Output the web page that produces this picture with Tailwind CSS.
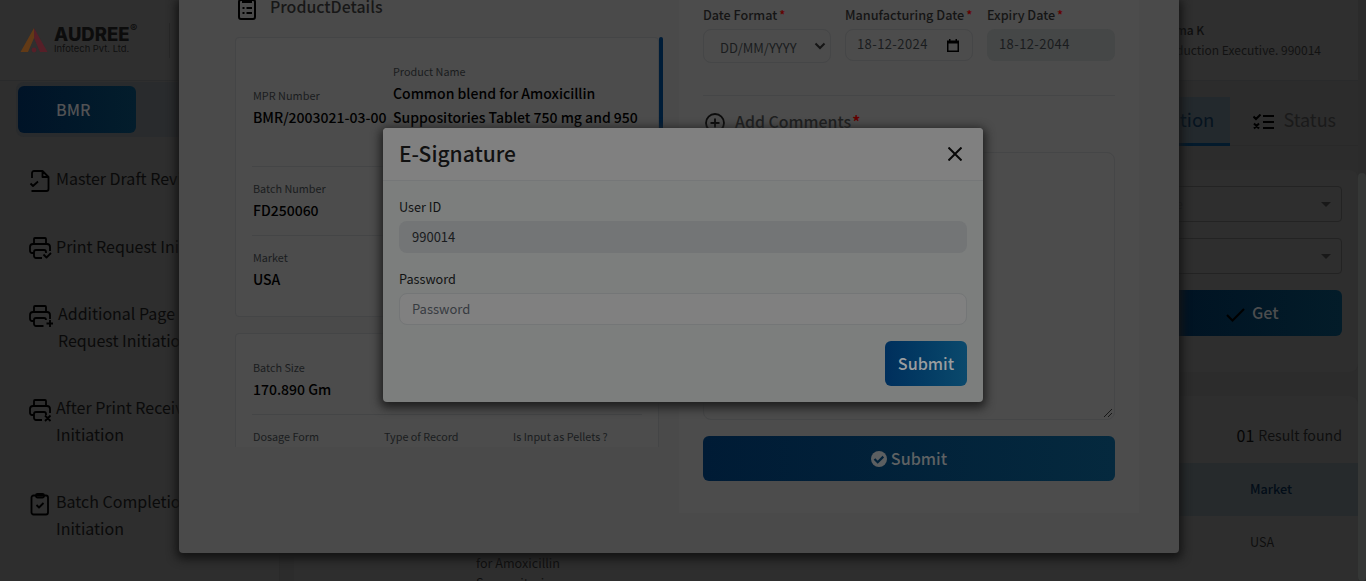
<!DOCTYPE html>
<html lang="en">
<head>
<meta charset="utf-8">
<title>E-Signature</title>
<script src="https://cdn.jsdelivr.net/npm/@tailwindcss/browser@4"></script>
</head>
<body class="relative h-[581px] w-[1366px] overflow-hidden bg-[#2d2d2d] font-['Noto_Sans_CJK_SC','Noto_Sans',sans-serif] text-[#0e0e0e]">

<!-- Application page -->
<div class="flex h-full flex-col">
  <div class="flex min-h-0 flex-1">
    <div class="flex w-[1358px] flex-col">
      <header class="flex h-[81px] shrink-0 items-center border-b border-[#292a2b] bg-[#2f2f2f] pl-5">
        <svg class="h-[26px] w-7" viewBox="0 0 28 26"><path d="M14 1v10L8 25H0.500z" fill="#623a16"/><path d="M14 1v10l6 14h7.500z" fill="#561f28"/><circle cx="14" cy="23" r="2.400" fill="#561f28"/></svg>
        <div class="ml-1.5 flex flex-col pt-[2px]">
          <div class="flex h-[15px] items-start font-['Inter',sans-serif] text-[18.500px] leading-[15px] font-extrabold text-[#0c0c0c]"><span class="w-[76px]">AUDREE</span><span class="-mt-1.5 text-[11px] font-semibold">®</span></div>
          <div class="mt-px font-['Inter',sans-serif] text-[9.400px] leading-3 text-[#101010]">Infotech Pvt. Ltd.</div>
        </div>
        <div class="ml-8 h-[35px] w-px bg-[#292929]"></div>
        <div class="ml-auto mr-[37px] flex flex-col pb-px">
          <div class="-ml-[9px] text-[12px] leading-5 font-medium">Reshma K</div>
          <div class="text-[12px] leading-5 text-[#121212]">Production Executive. 990014</div>
        </div>
      </header>
      <div class="flex min-h-0 flex-1">
        <aside class="w-[280px] shrink-0 border-r border-[#2a2a2a] bg-[#2e2e2e] pt-px pl-4">
          <div class="h-[55px] rounded-lg bg-[#292b2d] pt-1 pl-0.5">
            <div class="flex h-[47px] w-[118px] items-center rounded-md bg-gradient-to-r from-[#001327] to-[#031d2c] pb-0.5 pl-[38px] text-[16px] font-medium text-[#515254]">BMR</div>
          </div>
          <nav class="text-[16px] leading-[27px] whitespace-nowrap text-[#0a0a0a]">
            <div class="mt-[28px] flex h-[68px] pl-3">
              <svg class="mt-1 mr-1 h-6 w-6 shrink-0" viewBox="0 0 24 24" fill="none" stroke="#000" stroke-width="1.800" stroke-linejoin="round"><path d="M4 9V4a2 2 0 0 1 2-2h8.500L20.500 8v12a2 2 0 0 1-2 2H3.500M14.500 2v6h6M2.500 14.500l2.500 2.500 5-4.500"/></svg>
              <div>Master Draft Review</div>
            </div>
            <div class="flex h-[67px] pl-3">
              <svg class="mt-[3px] mr-1 h-6 w-6 shrink-0" viewBox="0 0 24 24" fill="none" stroke="#000" stroke-width="1.800" stroke-linejoin="round"><path d="M6 7.500V3a1 1 0 0 1 1-1h10a1 1 0 0 1 1 1v4.500M6 17H4a2 2 0 0 1-2-2v-4a3 3 0 0 1 3-3h14a3 3 0 0 1 3 3v4M14 22H8a2 2 0 0 1-2-2v-4a2 2 0 0 1 2-2h8a2 2 0 0 1 2 2v1M15.500 18.500l3 3 4.500-4.500"/></svg>
              <div>Print Request Initiation</div>
            </div>
            <div class="flex h-[94px] pl-3">
              <svg class="mt-1 mr-[5px] h-6 w-[25px] shrink-0" viewBox="0 0 25 24" fill="none" stroke="#000" stroke-width="1.800" stroke-linejoin="round"><path d="M6 7.500V3a1 1 0 0 1 1-1h10a1 1 0 0 1 1 1v4.500M6 17H4a2 2 0 0 1-2-2v-4a3 3 0 0 1 3-3h14a3 3 0 0 1 3 3v4M15.500 22H8a2 2 0 0 1-2-2v-4a2 2 0 0 1 2-2h8a2 2 0 0 1 2 2M18.500 19.500h7M22 16v7"/></svg>
              <div>Additional Page<br>Request Initiation</div>
            </div>
            <div class="flex h-[94px] pl-3">
              <svg class="mt-1 mr-1 h-6 w-6 shrink-0" viewBox="0 0 24 24" fill="none" stroke="#000" stroke-width="1.800" stroke-linejoin="round"><path d="M6 7.500V3a1 1 0 0 1 1-1h10a1 1 0 0 1 1 1v4.500M6 17H4a2 2 0 0 1-2-2v-4a3 3 0 0 1 3-3h14a3 3 0 0 1 3 3v4M14 22H8a2 2 0 0 1-2-2v-4a2 2 0 0 1 2-2h8a2 2 0 0 1 2 2v1M17 17.500l5.500 5.500M22.500 17.500L17 23"/></svg>
              <div>After Print Received<br>Initiation</div>
            </div>
            <div class="flex pl-3">
              <svg class="mt-1 mr-1 h-6 w-6 shrink-0" viewBox="0 0 24 24" fill="none" stroke="#000" stroke-width="1.800" stroke-linejoin="round"><rect x="3.500" y="3.500" width="16.500" height="19" rx="2"/><rect x="8" y="2" width="8" height="3.500" rx="1.500"/><path d="M8.500 13l2.500 2.500 4.500-4.500"/></svg>
              <div>Batch Completion<br>Initiation</div>
            </div>
          </nav>
        </aside>
        <main class="flex min-w-0 flex-1 flex-col bg-[#2c2c2c] pl-3.5">
          <div class="mt-4 flex h-[49px] shrink-0 justify-end border-b border-[#292929] text-[18px]">
            <div class="-mb-px flex items-center border-b-[3px] border-[#031a2c] bg-[#23292d] px-4 pb-px text-[18.500px] text-[#06131f]">Initiation</div>
            <div class="flex items-center pr-[22px] pb-1 pl-[23px] text-[#1a1a1a]">
              <svg class="mt-1.5 mr-[9px] h-4 w-[21px]" viewBox="0 0 21 16" fill="none" stroke="#000" stroke-width="2"><path d="M10 2h11M10 8h11M10 14h11M0.500 2.500L3 5l4.500-4.500M1 9.500l5 5M6 9.500l-5 5"/></svg>
              <span>Status</span>
            </div>
          </div>
          <section class="mt-6 flex h-[202px] shrink-0 flex-col items-end rounded-lg bg-[#2e2e2e] pt-4 pr-4">
            <div class="flex h-9 w-[330px] items-center justify-between rounded border border-[#232323] pr-[10px] pl-[115px] text-[13px] text-[#242424]"><span class="w-[55px] text-right">Type</span><span class="h-0 w-0 border-x-[5px] border-t-[5px] border-x-transparent border-t-[#181818]"></span></div>
            <div class="mt-4 flex h-9 w-[330px] items-center justify-end rounded border border-[#232323] pr-[10px]"><span class="h-0 w-0 border-x-[5px] border-t-[5px] border-x-transparent border-t-[#181818]"></span></div>
            <div class="mt-4 flex h-[46px] w-[180px] items-center rounded-md bg-gradient-to-r from-[#001222] to-[#031c29] pb-px pl-[64px] text-[16.200px] font-medium text-[#4c4d4e]">
              <svg class="mt-1 mr-[7px] h-[14px] w-[19px]" viewBox="0 0 19 14" fill="none" stroke="#000" stroke-width="2"><path d="M1 7l5.500 5.500L18 1"/></svg>Get
            </div>
          </section>
          <section class="mt-6 flex min-h-0 flex-1 flex-col rounded-t-lg bg-[#2e2e2e]">
            <div class="flex h-[67px] shrink-0 items-center justify-end gap-1 pt-2.5 pr-4 text-[14.200px] leading-6 text-[#0e0e0e]"><span class="text-[16px] text-[#050505]">01</span> Result found</div>
            <div class="flex h-[53px] shrink-0 items-center justify-end bg-[#262a2c] pb-0.5 text-[12.700px] font-medium text-[#020d18]"><span class="w-[108px]">Market</span></div>
            <div class="flex justify-between pt-4 pl-[182px] text-[12.600px] leading-5">
              <div class="w-[100px] pt-[21px]">for Amoxicillin<br>Suppositories</div><span class="w-[108px]">USA</span>
            </div>
          </section>
        </main>
      </div>
    </div>
    <div class="w-2 bg-[#2b2b2b] pt-[173px]"><div class="h-[408px] rounded-full bg-[#353736]"></div></div>
  </div>
</div>

<!-- Product details dialog -->
<div class="absolute top-0 left-[179px] flex h-[553px] w-[1000px] overflow-visible rounded-b bg-[#4a4a4a] pl-14 shadow-[0_3px_10px_3px_#141414]">
  <div class="flex w-[428px] flex-col">
    <div class="flex h-[37px] items-start">
      <svg class="-mt-1 h-6 w-6" viewBox="0 0 24 24" fill="none" stroke="#000" stroke-width="2"><rect x="4" y="4" width="16" height="19" rx="2"/><path d="M8 3v3h8V3M7.500 12h2M11.500 12h5.500M7.500 17h2M11.500 17h5.500"/></svg>
      <h2 class="-mt-[5px] ml-[11px] text-[15.900px] leading-6 font-medium text-[#171717]">ProductDetails</h2>
    </div>
    <div class="flex h-[410px] overflow-hidden text-[14px] leading-6 font-medium text-black">
      <div class="w-[424px]">
        <div class="h-[280px] rounded border border-[#444546] bg-[#4c4c4c] px-4 py-3">
          <div class="flex h-[117px] items-center border-b border-[#444546] pl-px">
            <div class="w-[140px] pb-[3px]"><div class="text-[10.900px] leading-5 font-normal text-[#1a1c1e]">MPR Number</div>BMR/2003021-03-00</div>
            <div class="pb-[3px]"><div class="text-[10.800px] leading-5 font-normal text-[#1a1c1e]">Product Name</div>Common blend for Amoxicillin<br>Suppositories Tablet 750 mg and 950<br>mg</div>
          </div>
          <div class="h-[69px] border-b border-[#444546] pt-[11px] pl-px"><div class="text-[10.800px] leading-5 font-normal text-[#1a1c1e]">Batch Number</div>FD250060</div>
          <div class="pt-[11px] pl-px"><div class="text-[10.800px] leading-5 font-normal text-[#1a1c1e]">Market</div>USA</div>
        </div>
        <div class="mt-4 h-[281px] rounded border border-[#444546] bg-[#4c4c4c] px-4 py-3">
          <div class="h-[69px] border-b border-[#444546] pt-[11px] pl-px"><div class="text-[10.800px] leading-5 font-normal text-[#1a1c1e]">Batch Size</div>170.890 Gm</div>
          <div class="flex pt-[11px] pl-px text-[10.800px] leading-5 font-normal text-[#1a1c1e]"><div class="w-[131px]">Dosage Form</div><div class="w-[129px]">Type of Record</div><div>Is Input as Pellets ?</div></div>
        </div>
      </div>
      <div class="h-[200px] w-1 rounded-full bg-[#001d38]"></div>
    </div>
  </div>
  <div class="ml-4 h-[513px] w-[460px] bg-[#4c4c4c] px-6">
    <div class="flex gap-3.5 pt-[5px] text-[13px] leading-5 text-[#151515]">
      <div class="w-32"><div class="text-[12.600px] font-medium">Date Format<span class="ml-0.5 text-[#640000]">*</span></div>
        <div class="mt-1 flex h-[34px] items-center justify-between rounded-lg border border-[#454647] pt-[3px] pr-1 pl-4 text-[#1a1c1e]">DD/MM/YYYY<svg class="-mt-1 h-2 w-3" viewBox="0 0 12 8" fill="none" stroke="#151515" stroke-width="2"><path d="M1.500 1.500L6 6l4.500-4.500"/></svg></div></div>
      <div class="w-32"><div class="text-[12.700px] font-medium whitespace-nowrap">Manufacturing Date<span class="ml-0.5 text-[#640000]">*</span></div>
        <div class="mt-1 flex h-8 items-center justify-between rounded-lg border border-[#454647] pr-[13px] pb-0.5 pl-[11px] tracking-[0.4px] text-[#1a1c1e]">18-12-2024<svg class="mt-0.5 h-[13px] w-3" viewBox="0 0 12 13"><path d="M2 0h1.500v1.500h5V0H10v1.500h2V13H0V1.500h2zM1.500 4.500v7h9v-7z" fill="#000" fill-rule="evenodd"/></svg></div></div>
      <div class="w-32"><div class="text-[12.600px] font-medium">Expiry Date<span class="ml-0.5 text-[#640000]">*</span></div>
        <div class="mt-1 flex h-8 items-center rounded-lg bg-[#454747] pb-0.5 pl-3 tracking-[0.4px] text-[#1a1c1e]">18-12-2044</div></div>
    </div>
    <div class="mt-8 border-t border-[#454647] pt-4">
      <div class="flex h-[22px] items-center text-[15.900px] leading-6 font-medium text-[#1e1f20]"><svg class="mr-2 h-6 w-6" viewBox="0 0 24 24" fill="none" stroke="#0c0c0c" stroke-width="1.800"><circle cx="12" cy="12" r="9"/><path d="M12 7.500v9M7.500 12h9"/></svg><span class="-mt-0.5">Add Comments<span class="ml-px font-bold text-[#640000]">*</span></span></div>
    </div>
    <div class="mt-[18px] flex h-[268px] items-end justify-end rounded-lg border border-[#454647]"><svg class="h-[11px] w-[11px]" viewBox="0 0 11 11" stroke="#171717" stroke-width="1"><path d="M1 9l8-8M5 9l4-4"/></svg></div>
    <div class="mt-4 flex h-[45px] items-center justify-center gap-1 rounded-md bg-gradient-to-r from-[#001b35] to-[#05293e] text-[16.200px] font-medium text-[#5e6163]"><svg class="h-4 w-4" viewBox="0 0 16 16"><circle cx="8" cy="8" r="8" fill="#5c5f61"/><path d="M3.500 8l3.200 3.200 5.600-5.600" fill="none" stroke="#03223a" stroke-width="2.200"/></svg>Submit</div>
  </div>
</div>

<!-- E-Signature dialog -->
<div class="absolute top-[128px] left-[383px] flex h-[274px] w-[600px] flex-col rounded bg-[#7c7e7d] shadow-[0_3px_10px_3px_#202020]">
  <div class="flex h-[53px] shrink-0 items-center justify-between rounded-t border-b border-[#757778] bg-[#808080] px-4">
    <h1 class="pb-[3px] text-[21px] leading-7 font-medium text-[#111]">E-Signature</h1>
    <svg class="mr-[5px] h-3.5 w-3.5" viewBox="0 0 14 14" stroke="#080808" stroke-width="2"><path d="M0.500 0.500l13 13M13.500 0.500l-13 13"/></svg>
  </div>
  <div class="flex flex-col px-4 pt-4 text-[13px] leading-5 text-[#111213]">
    <label class="text-[12.700px]">User ID</label>
    <div class="mt-1 flex h-8 items-center rounded-lg bg-[#737576] px-[13px] text-[#191b1d]">990014</div>
    <label class="mt-4 text-[12.700px]">Password</label>
    <div class="mt-1 flex h-8 items-center rounded-lg border border-[#747677] bg-[#808080] px-3 text-[#373b40]">Password</div>
    <button class="mt-4 h-[45px] w-[82px] self-end rounded-md bg-gradient-to-r from-[#002f5c] to-[#0b496c] pb-px text-[16.200px] font-medium text-[#9a9d9f]">Submit</button>
  </div>
</div>
</body>
</html>
